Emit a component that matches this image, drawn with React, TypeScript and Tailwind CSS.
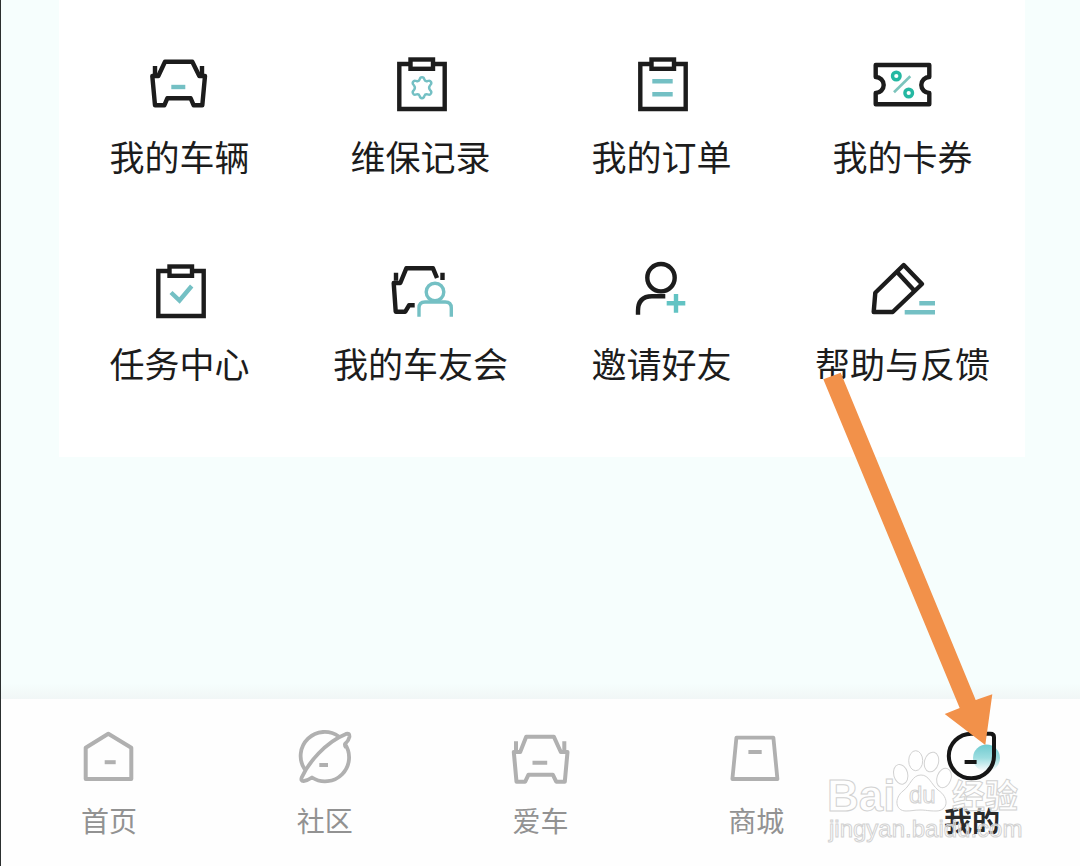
import type { ReactNode } from 'react'

const INK = '#1c1c1c'
const TEAL = '#74c0c4'
const GREY = '#b0b0b0'

const TileIcon = ({ children }: { children: ReactNode }) => (
  <svg
    className="w-[73px] h-16"
    viewBox="0 0 73 64"
    fill="none"
    stroke={INK}
    strokeWidth="4.4"
    strokeLinejoin="round"
    aria-hidden="true"
  >
    {children}
  </svg>
)

const NavIcon = ({ children }: { children: ReactNode }) => (
  <svg
    className="w-16 h-16"
    viewBox="0 0 64 64"
    fill="none"
    stroke={GREY}
    strokeWidth="4"
    strokeLinejoin="round"
    aria-hidden="true"
  >
    {children}
  </svg>
)

const CarIcon = () => (
  <TileIcon>
    <path d="M22 8.7H49.3L56.3 23H62L59.3 52.3H50.7L47.7 45.3H24.3L21.3 52.3H12L9.3 23H15.3Z" />
    <path d="M12 13V21M59 13V21" />
    <path d="M28.3 34H42.3" stroke={TEAL} />
  </TileIcon>
)

const Clipboard = ({ children }: { children: ReactNode }) => (
  <TileIcon>
    <path d="M26 11H15.3V56H60.7V11H50" strokeLinejoin="miter" />
    <rect x="26.5" y="6.5" width="22.5" height="9.3" strokeLinejoin="miter" />
    {children}
  </TileIcon>
)

const RecordIcon = () => (
  <Clipboard>
    <path
      d="M35.6 26.6Q36 24.2 38 24.2Q40 24.2 40.4 26.6Q41.2 28.8 43.6 28Q46 27 47 28.9Q48 30.8 46 32.4Q44.2 34.7 46 37Q48 38.6 47 40.5Q46 42.4 43.6 41.4Q41.2 40.6 40.4 42.8Q40 45.2 38 45.2Q36 45.2 35.6 42.8Q34.8 40.6 32.4 41.4Q30 42.4 29 40.5Q28 38.6 30 37Q31.8 34.7 30 32.4Q28 30.8 29 28.9Q30 27 32.4 28Q34.8 28.8 35.6 26.6Z"
      stroke={TEAL}
      strokeWidth="2.4"
    />
  </Clipboard>
)

const OrderIcon = () => (
  <Clipboard>
    <path d="M27.3 28.3H47.7M27.3 41.3H47.7" stroke={TEAL} />
  </Clipboard>
)

const TaskIcon = () => (
  <Clipboard>
    <path d="M28 32.5L36.5 40.5L48.7 26" stroke={TEAL} strokeLinejoin="miter" />
  </Clipboard>
)

const CouponIcon = () => (
  <TileIcon>
    <path d="M9.7 12H63.3V24A8 8 0 0 0 63.3 40V51.3H9.7V40A8 8 0 0 0 9.7 24Z" />
    <path d="M28 39.3L44.3 23.3" stroke="#7cc4bc" strokeWidth="2.6" />
    <circle cx="30.3" cy="23" r="3.8" stroke="#25b8a2" strokeWidth="3.4" />
    <circle cx="42.7" cy="40" r="3.8" stroke="#25b8a2" strokeWidth="3.4" />
  </TileIcon>
)

const ClubIcon = () => (
  <TileIcon>
    <path d="M53 18L49 8.3H22.3L16.3 23H9.7L11.7 51.7H21.3L25 45.3H30.7" />
    <path d="M12 12.7V20.7M58.5 12.7V20" />
    <circle cx="51" cy="32" r="8.8" stroke={TEAL} strokeWidth="3.4" />
    <path d="M35 56.7V48Q35 42 41 42H61.3Q67.3 42 67.3 48V56.7" stroke={TEAL} strokeWidth="3.4" />
  </TileIcon>
)

const InviteIcon = () => (
  <TileIcon>
    <circle cx="36" cy="17.7" r="13.7" />
    <path d="M13 54.7V51Q13 36.3 27 36.3H40.3" />
    <path d="M41.7 43.3H60.3M51 34V52.7" stroke="#62c3c3" />
  </TileIcon>
)

const FeedbackIcon = () => (
  <TileIcon>
    <path d="M37.7 5L56 24L26.7 52H7.7L9.3 32.7Z" />
    <path d="M31.3 12.2L48.2 30.4" />
    <path d="M53.3 43.3H69M38.7 52.3H69" stroke={TEAL} />
  </TileIcon>
)

const HomeIcon = () => (
  <NavIcon>
    <path d="M8.7 21.7L31.3 7.7L54.3 21.7V53H8.7Z" />
    <path d="M27.7 36.2H38.7" />
  </NavIcon>
)

const CommunityIcon = () => (
  <NavIcon>
    <path
      d="M11.7 43.3A24 24 0 0 1 45.7 10.5M52 18A24 24 0 0 1 19 51.5Q14.5 54.5 10.5 55.2Q7.5 55.2 8.7 51.5Q14 39.5 25.7 27.3Q38 14 53 7.9Q56.8 6.6 56.4 11Q55.8 14.5 52 18Q51.6 19.5 53 21.5"
      strokeWidth="3.8"
    />
    <path d="M26.3 39H35" />
  </NavIcon>
)

const NavCarIcon = () => (
  <NavIcon>
    <path d="M18.2 10.7H45.8L52.8 26H59.5L56.8 55.7H48.2L44.8 48.7H20.5L17.2 55.7H8.5L5.8 26H12.2Z" />
    <path d="M8 15.3V24M56.3 15.3V24M24.5 36.8H39.2" />
  </NavIcon>
)

const MallIcon = () => (
  <NavIcon>
    <path d="M12.4 11.7H49.4L53.4 53H8.4Z" strokeWidth="3.8" />
    <path d="M24.4 26H37.7" />
  </NavIcon>
)

const MineIcon = () => (
  <NavIcon>
    <defs>
      <linearGradient id="mineGlow" x1="0" y1="0" x2="0" y2="1">
        <stop offset="0" stopColor="#6fcbd0" />
        <stop offset="0.5" stopColor="#9ddde0" />
        <stop offset="1" stopColor="#fefefe" />
      </linearGradient>
    </defs>
    <circle cx="46.5" cy="32" r="13.5" fill="url(#mineGlow)" stroke="none" />
    <path
      d="M31.3 7.7H50.5Q54 7.7 54 11.2V30A22.6 22.3 0 1 1 31.3 7.7Z"
      stroke="#161616"
    />
    <path d="M24.6 36H36.6" stroke="#161616" />
  </NavIcon>
)

const services = [
  { label: '我的车辆', Icon: CarIcon },
  { label: '维保记录', Icon: RecordIcon },
  { label: '我的订单', Icon: OrderIcon },
  { label: '我的卡券', Icon: CouponIcon },
  { label: '任务中心', Icon: TaskIcon },
  { label: '我的车友会', Icon: ClubIcon },
  { label: '邀请好友', Icon: InviteIcon },
  { label: '帮助与反馈', Icon: FeedbackIcon },
]

const tabs = [
  { label: '首页', Icon: HomeIcon, active: false },
  { label: '社区', Icon: CommunityIcon, active: false },
  { label: '爱车', Icon: NavCarIcon, active: false },
  { label: '商城', Icon: MallIcon, active: false },
  { label: '我的', Icon: MineIcon, active: true },
]

const Arrow = () => (
  <svg
    className="absolute right-[87px] bottom-[121px] w-[170px] h-[373px] pointer-events-none"
    viewBox="823 372 170 373"
    aria-hidden="true"
  >
    <path
      d="M823.3 379.3L840.7 372.7L975.7 700L992.3 694.3L985.3 745L944.7 714L959.7 708Z"
      fill="#f2914a"
    />
  </svg>
)

const Watermark = () => (
  <svg
    className="absolute right-[54px] bottom-[18px] w-[200px] h-[100px] pointer-events-none"
    viewBox="826 748 200 100"
    fill="#ffffff"
    fillOpacity="0.6"
    stroke="#d2d2d2"
    strokeWidth="1"
    fontFamily="'Liberation Sans', 'Noto Sans CJK SC', sans-serif"
  >
    <ellipse cx="915.7" cy="760.7" rx="7" ry="10" />
    <ellipse cx="931.5" cy="762" rx="7" ry="10" transform="rotate(15 931.5 762)" />
    <ellipse cx="900.7" cy="774.3" rx="7" ry="10" transform="rotate(-15 900.7 774.3)" />
    <ellipse cx="944" cy="778" rx="7" ry="10" transform="rotate(20 944 778)" />
    <path d="M921 775C929 775 931 784 938 790C950 798 948 811 936 811C928 811 926 810 920 810C914 810 912 811 906 811C895 811 894 798 903 791C911 785 912 775 921 775Z" />
    <text x="827" y="811" fontSize="44" fontWeight="700">Bai</text>
    <text x="909" y="803" fontSize="24">du</text>
    <text x="952" y="808" fontSize="33" fontWeight="700">经验</text>
    <text x="829" y="837" fontSize="24">jingyan.baidu.com</text>
  </svg>
)

export default function App() {
  return (
    <div className="relative min-h-screen flex flex-col bg-[#f6fefd] border-l border-[#2b2f2f] font-['Noto_Sans_CJK_SC',sans-serif]">
      <main className="flex-1">
        <section className="ml-[58px] mr-[55px] pr-0.5 pt-[53px] pb-[74px] bg-white">
          <div className="grid grid-cols-4 gap-y-[84px]">
            {services.map(({ label, Icon }) => (
              <button key={label} type="button" className="flex flex-col items-center gap-[19px]">
                <Icon />
                <span className="text-[35px] leading-10 whitespace-nowrap text-[#1c1c1c]">{label}</span>
              </button>
            ))}
          </div>
        </section>
      </main>

      {/* Soft shade above the tab bar */}
      <div className="h-4 bg-linear-to-b from-[#f6fefd] to-[#f1f6f6]" />

      <nav className="grid grid-cols-5 pt-[27px] pb-[26px] bg-[#fefefe]">
        {tabs.map(({ label, Icon, active }) => (
          <a
            key={label}
            href="#"
            aria-current={active ? 'page' : undefined}
            className="flex flex-col items-center gap-2.5"
          >
            <Icon />
            <span
              className={
                active
                  ? 'text-[28px] leading-10 font-bold text-[#2a2a2a]'
                  : 'text-[28px] leading-10 text-[#929292]'
              }
            >
              {label}
            </span>
          </a>
        ))}
      </nav>

      <Watermark />
      <Arrow />
    </div>
  )
}
